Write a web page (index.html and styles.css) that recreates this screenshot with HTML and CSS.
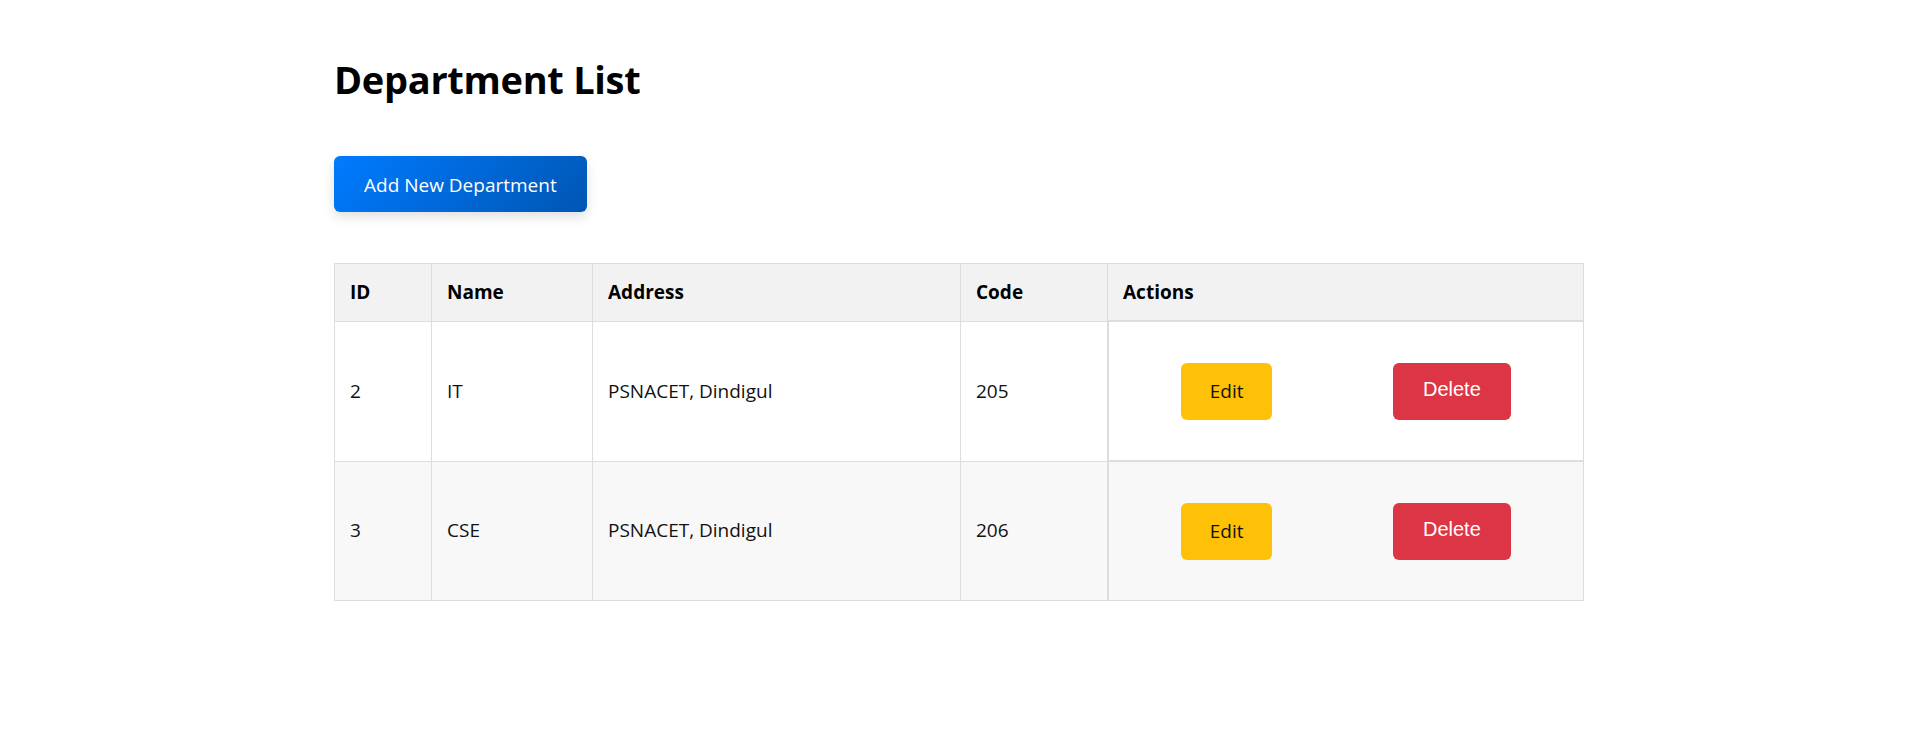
FILE: index.html
```html
<!DOCTYPE html>
<html lang="en">
<head>
<meta charset="utf-8">
<title>Department List</title>
<link rel="stylesheet" href="styles.css">
</head>
<body>
<div class="container">
  <h1 class="title">Department List</h1>
  <div class="toolbar">
    <button class="btn-add">Add New Department</button>
  </div>
  <table class="dept-table">
    <colgroup>
      <col class="col-id">
      <col class="col-name">
      <col class="col-address">
      <col class="col-code">
      <col class="col-actions">
    </colgroup>
    <thead>
      <tr>
        <th>ID</th>
        <th>Name</th>
        <th>Address</th>
        <th>Code</th>
        <th class="th-actions">Actions</th>
      </tr>
    </thead>
    <tbody>
      <tr>
        <td>2</td>
        <td>IT</td>
        <td>PSNACET, Dindigul</td>
        <td>205</td>
        <td class="td-actions">
          <div class="actions">
            <button class="btn-edit">Edit</button>
            <button class="btn-delete">Delete</button>
          </div>
        </td>
      </tr>
      <tr class="row-alt">
        <td>3</td>
        <td>CSE</td>
        <td>PSNACET, Dindigul</td>
        <td>206</td>
        <td class="td-actions">
          <div class="actions">
            <button class="btn-edit">Edit</button>
            <button class="btn-delete">Delete</button>
          </div>
        </td>
      </tr>
    </tbody>
  </table>
</div>
</body>
</html>
```

FILE: styles.css
```css
html, body {
  margin: 0;
  padding: 0;
  background: #ffffff;
}

body {
  font-family: "Open Sans", "Noto Sans", sans-serif;
  color: #000;
}

.container {
  max-width: 1250px;
  margin: 0 auto;
  padding-top: 55px;
}

.title {
  margin: 0 0 53px 0;
  font-size: 38px;
  line-height: 48px;
  font-weight: 700;
  letter-spacing: -0.3px;
}

.toolbar {
  margin-bottom: 51px;
}

.btn-add {
  display: inline-block;
  height: 56px;
  padding: 2px 30px 0 30px;
  border: none;
  border-radius: 6px;
  background: linear-gradient(135deg, #007bff 0%, #0056b3 100%);
  color: #fff;
  font-family: "Open Sans", "Noto Sans", sans-serif;
  font-size: 19px;
  box-shadow: 0 5px 12px rgba(0, 0, 0, 0.13);
  cursor: pointer;
}

.dept-table {
  width: 1249px;
  table-layout: fixed;
  border-collapse: collapse;
  font-size: 19px;
}

.col-id { width: 97px; }
.col-name { width: 161px; }
.col-address { width: 368px; }
.col-code { width: 147px; }
.col-actions { width: 476px; }

.dept-table th,
.dept-table td {
  border: 1px solid #dddddd;
  padding: 15px;
  line-height: 27px;
  text-align: left;
}

.dept-table th {
  background: #f2f2f2;
  font-weight: 700;
  padding-top: 15px;
  padding-bottom: 14px;
}

.dept-table td {
  background: #ffffff;
  color: #111;
}

.dept-table .row-alt td {
  background: #f8f8f8;
}

.dept-table .td-actions {
  padding: 15px 12px;
  border-left: 2px solid #dddddd;
  border-top: 2px solid #dddddd;
}

.actions {
  display: flex;
  align-items: center;
  justify-content: space-around;
  height: 108px;
}

.btn-edit,
.btn-delete {
  height: 57px;
  padding: 0 30px;
  border: none;
  border-radius: 6px;
  font-size: 20px;
  cursor: pointer;
}

.btn-edit {
  background: #ffc107;
  color: #111;
  font-family: "Open Sans", "Noto Sans", sans-serif;
  font-size: 19px;
  padding: 0 29px;
}

.btn-delete {
  background: #dc3545;
  color: #fff;
  font-family: "Liberation Sans", Arial, sans-serif;
  padding-bottom: 3px;
}
```
